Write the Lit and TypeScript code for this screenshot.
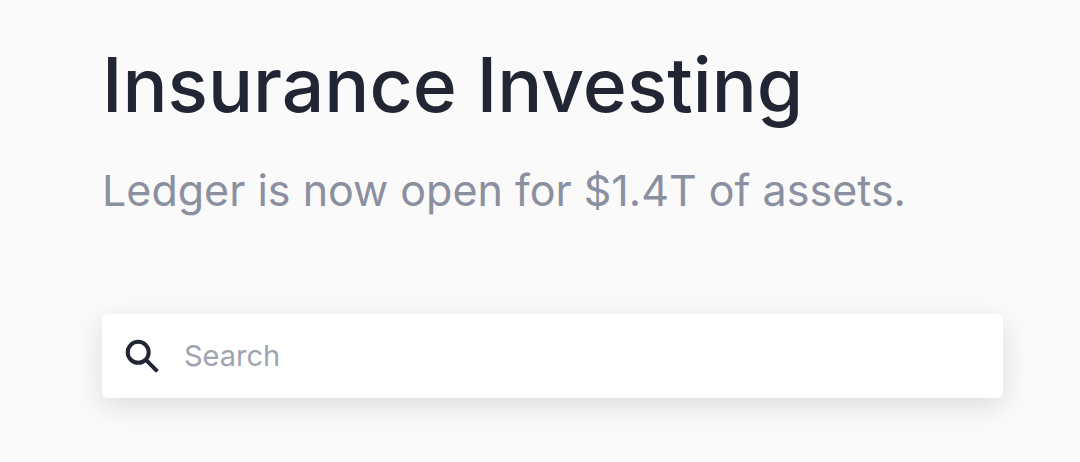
import { LitElement, html, css } from "lit";
import { customElement, state } from "lit/decorators.js";

@customElement("app-root")
export class AppRoot extends LitElement {
  static styles = css`
    :host {
      display: block;
      box-sizing: border-box;
      min-height: 100vh;
      padding: 35px 77px 64px 102px;
      background: #fafafa;
      color: #212534;
      font-family: Inter, "Liberation Sans", sans-serif;
    }
    h1 {
      margin: 0;
      font-size: 75px;
      line-height: 100px;
      font-weight: 500;
    }
    .lead {
      margin: 25px 0 0;
      color: #8a909f;
      font-size: 43px;
      line-height: 60px;
    }
    .search {
      display: flex;
      align-items: center;
      gap: 20px;
      height: 84px;
      margin-top: 94px;
      padding: 0 18px;
      box-sizing: border-box;
      border-radius: 6px;
      background: #fff;
      box-shadow: 0 8px 28px rgba(0, 0, 0, 0.12);
    }
    .icon {
      flex: none;
      width: 44px;
      height: 44px;
      fill: none;
      stroke: currentColor;
      stroke-width: 4;
    }
    .field {
      flex: 1;
      min-width: 0;
      padding: 0;
      border: 0;
      outline: 0;
      background: none;
      color: inherit;
      font: inherit;
      font-size: 29px;
      line-height: 40px;
    }
    .field::placeholder {
      color: #a0a3b0;
      opacity: 1;
    }
  `;

  @state() private query = "";

  private onInput(event: InputEvent) {
    this.query = (event.target as HTMLInputElement).value;
  }

  render() {
    return html`
      <main>
        <h1>Insurance Investing</h1>
        <p class="lead">Ledger is now open for $1.4T of assets.</p>
        <label class="search">
          <svg class="icon" viewBox="0 0 44 44" aria-hidden="true">
            <circle cx="18.200" cy="18.300" r="10.500" />
            <path d="M26.200 26.200 L37.400 37.400" />
          </svg>
          <input class="field" type="text" placeholder="Search" aria-label="Search" .value=${this.query} @input=${this.onInput} />
        </label>
      </main>
    `;
  }
}
